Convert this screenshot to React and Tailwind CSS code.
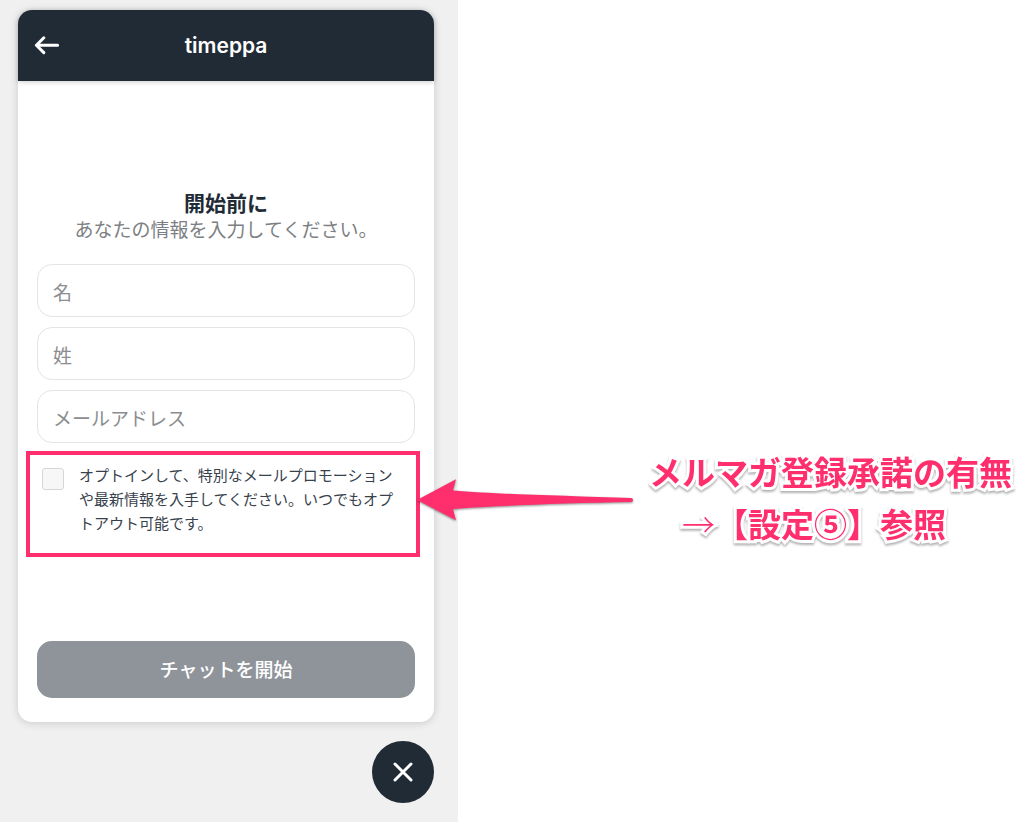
import React, { useState } from 'react';

const fields = [
  { id: 'firstName', label: '名', type: 'text' },
  { id: 'lastName', label: '姓', type: 'text' },
  { id: 'email', label: 'メールアドレス', type: 'email' },
];

const BackIcon = () => (
  <svg width="26" height="19" viewBox="0 0 26 19" fill="none" stroke="currentColor" strokeWidth="3" strokeLinecap="round" strokeLinejoin="round">
    <path d="M9.800 1.800 2.400 9.200l7.400 7.400M2.800 9.200h20.800" />
  </svg>
);

const CloseIcon = () => (
  <svg width="20" height="20" viewBox="0 0 20 20" fill="none" stroke="currentColor" strokeWidth="3" strokeLinecap="round">
    <path d="M2 2l16 16M18 2 2 18" />
  </svg>
);

const PointerArrow = () => (
  <svg
    className="absolute left-full top-1/2 -translate-y-1/2 pointer-events-none drop-shadow-[0_1px_1px_rgba(0,0,0,0.45)]"
    width="220"
    height="46"
    viewBox="0 0 220 46"
    fill="#ff2f6d"
  >
    <path d="M2 23 41 2.300 38 13.500C80 17 150 19 216 21a2 2 0 0 1 0 4C150 26 80 29 38 32L41 43.300Z" />
  </svg>
);

const ChatWidget = () => {
  const [values, setValues] = useState({ firstName: '', lastName: '', email: '' });
  const [optIn, setOptIn] = useState(false);

  const handleChange = (e) => {
    setValues({ ...values, [e.target.id]: e.target.value });
  };

  return (
    <form
      onSubmit={(e) => e.preventDefault()}
      className="flex-1 flex flex-col bg-white rounded-[14px] shadow-[0_1px_8px_rgba(0,0,0,0.16)]"
    >
      <header className="grid grid-cols-[48px_1fr_48px] items-center h-[71px] px-2 bg-[#212b36] text-white rounded-t-[14px] shadow-[0_1px_5px_rgba(0,0,0,0.2)]">
        <button type="button" aria-label="戻る" className="flex justify-start pl-2">
          <BackIcon />
        </button>
        <h1 className="text-center text-[21px] leading-7 font-semibold">timeppa</h1>
      </header>

      <div className="flex-1 flex flex-col px-[19px] pb-6">
        <div className="flex-1 flex flex-col justify-center pt-1">
          <h2 className="text-center text-[21px] leading-7 font-bold text-[#212b36]">開始前に</h2>
          <p className="text-center text-[19px] leading-[26px] text-[#7c7f83]">あなたの情報を入力してください。</p>

          <div className="mt-5 flex flex-col gap-[10px]">
            {fields.map((field) => (
              <input
                key={field.id}
                id={field.id}
                type={field.type}
                aria-label={field.label}
                placeholder={field.label}
                value={values[field.id]}
                onChange={handleChange}
                className="w-full h-[53px] px-[15px] pt-1.5 text-[19px] text-[#212b36] placeholder:text-[#8b8d90] bg-white border border-[#e4e4e4] rounded-[15px] outline-none"
              />
            ))}
          </div>

          <div className="relative mt-[21px] flex items-start pl-[5px]">
            <input
              id="optIn"
              type="checkbox"
              checked={optIn}
              onChange={(e) => setOptIn(e.target.checked)}
              className="appearance-none shrink-0 mt-1 size-[22px] bg-[#f7f7f7] border border-[#d6d6d6] rounded-[3px] checked:bg-[#212b36]"
            />
            <label htmlFor="optIn" className="flex-1 ml-[15px] mr-3 text-[15px] leading-6 text-[#37414c]">
              オプトインして、特別なメールプロモーションや最新情報を入手してください。いつでもオプトアウト可能です。
            </label>
            <div className="absolute -left-[11px] -right-[5px] -top-[13px] -bottom-[21px] border-4 border-[#ff2f6d] pointer-events-none" />
            <PointerArrow />
          </div>
        </div>

        <button type="submit" className="h-[57px] pt-1 rounded-[15px] bg-[#8f949a] text-white text-[19px] font-medium">
          チャットを開始
        </button>
      </div>
    </form>
  );
};

const App = () => {
  return (
    <main className="min-h-screen grid grid-cols-[458fr_566fr] bg-white font-['Inter','Noto_Sans_CJK_JP',sans-serif]">
      <section className="flex flex-col gap-[19px] pt-[10px] pb-[19px] pl-[18px] pr-6 bg-[#f0f0f0]">
        <ChatWidget />
        <button
          type="button"
          aria-label="閉じる"
          className="self-end size-[62px] flex items-center justify-center rounded-full bg-[#212b36] text-white"
        >
          <CloseIcon />
        </button>
      </section>

      <section className="flex flex-col justify-center items-end pt-[172px] pr-3">
        <p className="text-center whitespace-pre font-['Noto_Sans_CJK_JP',sans-serif] text-[33px] leading-[52px] font-bold text-[#ff2f6d] [-webkit-text-stroke:6px_white] [paint-order:stroke_fill] drop-shadow-[0_2px_1px_rgba(0,0,0,0.3)]">
          メルマガ登録承諾の有無
          <br />
          <span className="font-light">→</span>【設定⑤】参照{'\u3000'}
        </p>
      </section>
    </main>
  );
};

export default App;
